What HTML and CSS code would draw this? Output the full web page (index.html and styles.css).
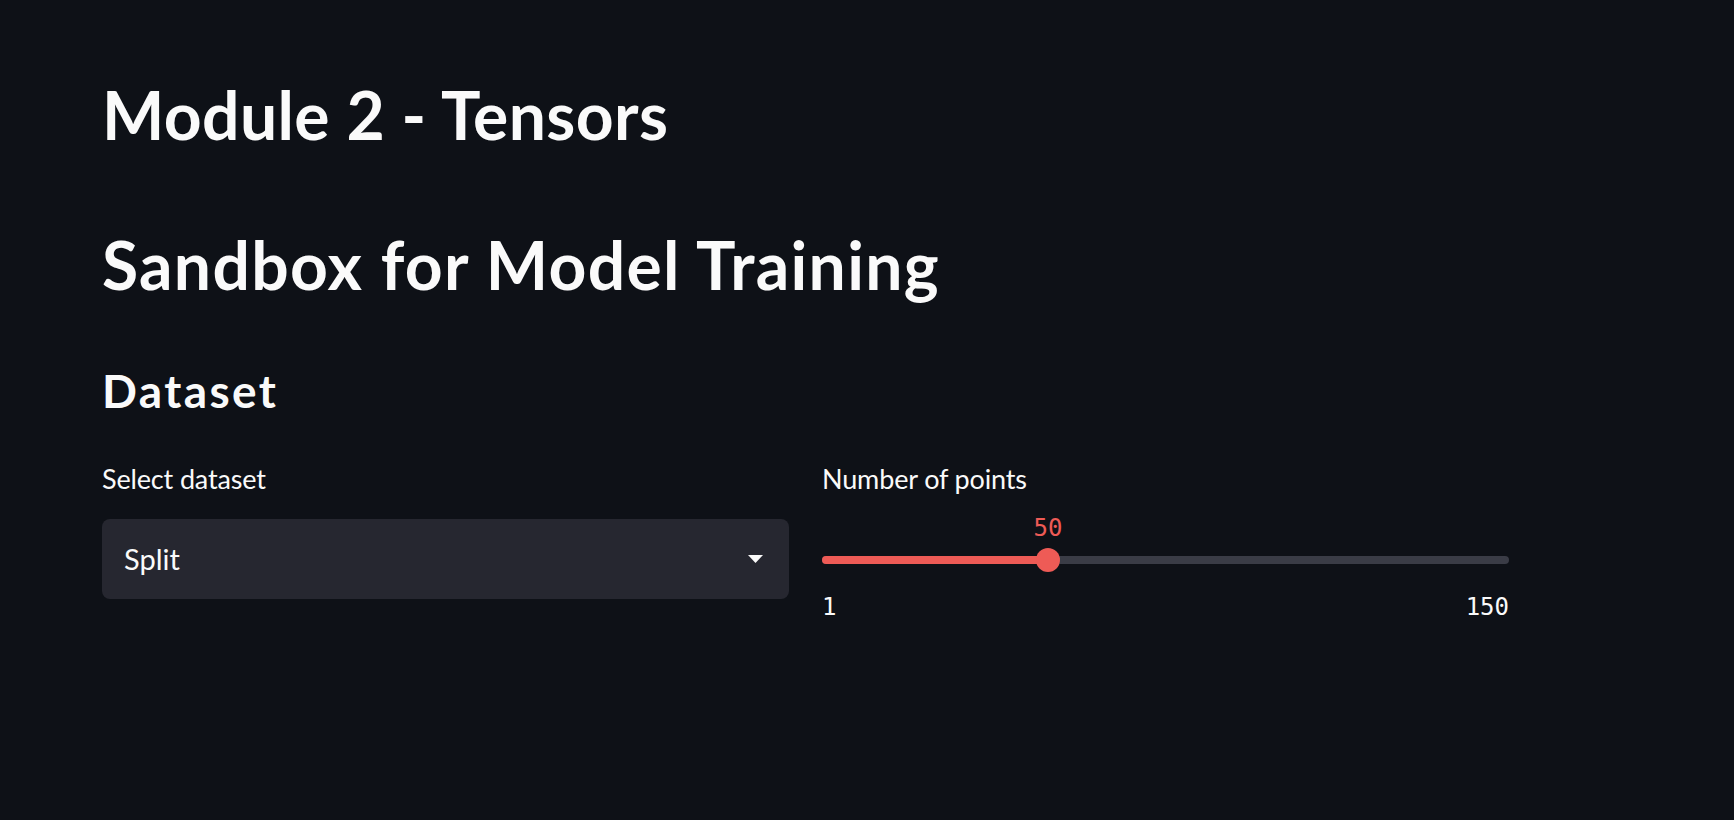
FILE: index.html
```html
<!DOCTYPE html>
<html lang="en">
<head>
<meta charset="utf-8">
<title>Module 2 - Tensors</title>
<link rel="stylesheet" href="styles.css">
</head>
<body>
<main class="main">
  <h1 class="title">Module 2 - Tensors</h1>
  <h1 class="title title-second">Sandbox for Model Training</h1>
  <h2 class="subheader">Dataset</h2>
  <div class="columns">
    <div class="column">
      <label class="widget-label">Select dataset</label>
      <div class="select">
        <span class="select-value">Split</span>
        <svg class="select-arrow" width="15" height="8" viewBox="0 0 15 8"><path d="M0 0 H15 L7.5 8 Z" fill="#fafafa"/></svg>
      </div>
    </div>
    <div class="column">
      <label class="widget-label">Number of points</label>
      <div class="track-zone">
        <div class="track"></div>
        <div class="track-fill" style="width: 32.89%"></div>
        <div class="thumb" style="left: 32.89%"></div>
        <div class="thumb-value" style="left: 32.89%">50</div>
      </div>
      <div class="tick-row">
        <span>1</span>
        <span>150</span>
      </div>
    </div>
  </div>
</main>
</body>
</html>
```
FILE: styles.css
```css
html, body {
  margin: 0;
  padding: 0;
  background: #0e1117;
  color: #fafafa;
  font-family: Lato, "Noto Sans", sans-serif;
}

.main {
  padding: 75px 0 0 102px;
}

.title {
  margin: 0;
  font-size: 66px;
  font-weight: 700;
  line-height: 1.2;
  letter-spacing: 0.4px;
}

.title-second {
  margin-top: 71px;
  letter-spacing: 1.3px;
}

.subheader {
  margin: 59px 0 0 0;
  font-size: 46px;
  font-weight: 700;
  line-height: 1.2;
  letter-spacing: 2.4px;
}

.columns {
  display: flex;
  gap: 33px;
  margin-top: 44px;
}

.column {
  width: 687px;
  display: flex;
  flex-direction: column;
}

.widget-label {
  display: block;
  font-size: 27px;
  line-height: 1.2;
  letter-spacing: -0.15px;
}

.select {
  margin-top: 24px;
  height: 80px;
  background: #262730;
  border-radius: 8px;
  display: flex;
  align-items: center;
  justify-content: space-between;
  padding: 0 26px 0 22px;
  box-sizing: border-box;
}

.select-value {
  font-size: 29px;
  line-height: 1.2;
}

.select-arrow {
  display: block;
}

.track-zone {
  position: relative;
  height: 24px;
  margin-top: 53px;
}

.track {
  margin-top: 8px;
  height: 8px;
  border-radius: 4px;
  background: #3a3c46;
}

.track-fill {
  position: absolute;
  left: 0;
  top: 8px;
  height: 8px;
  border-radius: 4px 0 0 4px;
  background: #ee5b56;
}

.thumb {
  position: absolute;
  top: 0;
  width: 24px;
  height: 24px;
  border-radius: 50%;
  background: #ee5b56;
  transform: translateX(-50%);
}

.thumb-value {
  position: absolute;
  bottom: calc(100% + 6px);
  transform: translateX(-50%);
  font-family: "DejaVu Sans Mono", monospace;
  font-size: 24px;
  line-height: 28px;
  color: #ee5b56;
}

.tick-row {
  margin-top: 21px;
  display: flex;
  justify-content: space-between;
  font-family: "DejaVu Sans Mono", monospace;
  font-size: 24px;
  line-height: 28px;
}
```
